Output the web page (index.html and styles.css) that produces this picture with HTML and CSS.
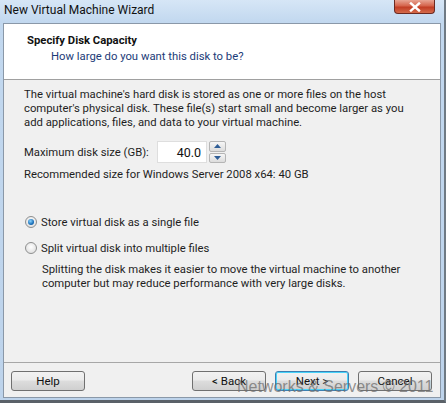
FILE: index.html
```html
<!DOCTYPE html>
<html>
<head>
<meta charset="utf-8">
<link rel="stylesheet" href="styles.css">
</head>
<body>
<div class="window">
  <div class="titlebar">
    <span class="title">New Virtual Machine Wizard</span>
    <div class="close"><svg width="14" height="10" viewBox="0 0 14 10"><path d="M3 1.5 L11 8.5 M11 1.5 L3 8.5" stroke="#ffffff" stroke-width="2.4" stroke-linecap="square"/></svg></div>
  </div>
  <div class="client">
    <div class="header">
      <div class="h-title">Specify Disk Capacity</div>
      <div class="h-sub">How large do you want this disk to be?</div>
    </div>
    <div class="body">
      <p class="para">The virtual machine's hard disk is stored as one or more files on the host computer's physical disk. These file(s) start small and become larger as you add applications, files, and data to your virtual machine.</p>
      <div class="size-row">
        <span class="label">Maximum disk size (GB):</span>
        <div class="spin">
          <div class="spin-input">40.0</div>
          <div class="spin-btns">
            <div class="spin-btn"><svg width="7" height="4" viewBox="0 0 7 4"><path d="M0 4 L3.5 0 L7 4Z" fill="#2f5d96"/></svg></div>
            <div class="spin-btn"><svg width="7" height="4" viewBox="0 0 7 4"><path d="M0 0 L3.5 4 L7 0Z" fill="#2f5d96"/></svg></div>
          </div>
        </div>
      </div>
      <div class="rec">Recommended size for Windows Server 2008 x64: 40 GB</div>
      <div class="radios">
        <div class="radio-row"><span class="radio checked"></span><span>Store virtual disk as a single file</span></div>
        <div class="radio-row"><span class="radio"></span><span>Split virtual disk into multiple files</span></div>
        <p class="desc">Splitting the disk makes it easier to move the virtual machine to another computer but may reduce performance with very large disks.</p>
      </div>
    </div>
    <div class="footer">
      <button class="btn help">Help</button>
      <div class="spacer"></div>
      <button class="btn">&lt; Back</button>
      <button class="btn default">Next &gt;</button>
      <button class="btn">Cancel</button>
    </div>
  </div>
  <div class="watermark">Networks &amp; Servers © 2011</div>
</div>
</body>
</html>
```
FILE: styles.css
```css
html, body {
  margin: 0;
  padding: 0;
  background: #ffffff;
  width: 448px;
  height: 406px;
  overflow: hidden;
}
body {
  font-family: Roboto, "Noto Sans", sans-serif;
  font-size: 11.3px;
  color: #1e1e1e;
}
.window {
  position: relative;
  width: 446px;
  height: 403px;
  background: linear-gradient(to bottom, #d6e6f6 0, #c2d8ef 22px, #bdd3eb 100%);
  border-right: 2px solid #6f7a84;
  border-bottom: 3px solid #5a6168;
  box-sizing: border-box;
  display: flex;
  flex-direction: column;
  padding: 0 3px 2px 3px;
}
.titlebar {
  height: 23px;
  display: flex;
  align-items: flex-start;
  position: relative;
}
.title {
  font-size: 12px;
  color: #111;
  margin: 3px 0 0 1px;
}
.close {
  position: absolute;
  left: 391px;
  top: 0;
  width: 41px;
  height: 14px;
  border: 1px solid #6b2a22;
  border-top: none;
  border-radius: 0 0 4px 4px;
  background: linear-gradient(to bottom, #e8a493 0, #d5644c 45%, #c23d25 55%, #d46b4b 100%);
  display: flex;
  align-items: center;
  justify-content: center;
  box-sizing: border-box;
}
.client {
  flex: 1;
  display: flex;
  flex-direction: column;
  border: 1px solid #8a98a8;
  background: #f0f0f0;
}
.header {
  height: 56px;
  background: #ffffff;
  border-bottom: 1px solid #a0a0a0;
  box-sizing: border-box;
  padding: 9px 0 0 23px;
}
.h-title {
  font-weight: bold;
  color: #111;
  line-height: 15px;
}
.h-sub {
  margin: 1px 0 0 24px;
  color: #1b3b78;
  line-height: 15px;
}
.body {
  flex: 1;
  padding: 8px 20px 0 20px;
}
.para {
  margin: 0;
  line-height: 14px;
}
.size-row {
  display: flex;
  align-items: center;
  margin-top: 11px;
}
.label {
  width: 133px;
}
.spin {
  display: flex;
  align-items: stretch;
  height: 22px;
}
.spin-input {
  width: 50px;
  background: #ffffff;
  border: 1px solid #dedede;
  box-sizing: border-box;
  text-align: right;
  padding: 3px 5px 0 0;
  font-size: 12.5px;
  color: #111;
}
.spin-btns {
  margin-left: 2px;
  width: 17px;
  display: flex;
  flex-direction: column;
  gap: 1px;
}
.spin-btn {
  flex: 1;
  border: 1px solid #b5b5b5;
  border-radius: 2px;
  background: linear-gradient(to bottom, #f6f6f6, #dcdcdc);
  display: flex;
  align-items: center;
  justify-content: center;
}
.rec {
  margin-top: 5px;
  line-height: 14px;
}
.radios {
  margin-top: 33px;
  padding-left: 1px;
}
.radio-row {
  display: flex;
  align-items: center;
  height: 14px;
  margin-bottom: 12px;
}
.radio {
  width: 12px;
  height: 12px;
  border-radius: 50%;
  border: 1px solid #8e8f8f;
  background: radial-gradient(circle at 50% 40%, #ffffff 0, #e3e3e3 70%);
  margin-right: 4px;
  box-sizing: border-box;
  position: relative;
}
.radio.checked::after {
  content: "";
  position: absolute;
  left: 2px;
  top: 2px;
  width: 6px;
  height: 6px;
  border-radius: 50%;
  background: radial-gradient(circle at 40% 35%, #8ad4ff 0, #1a6fb8 60%, #0d4f94 100%);
}
.desc {
  margin: -4px 0 0 17px;
  line-height: 14px;
}
.footer {
  height: 35px;
  border-top: 1px solid #a7a7a7;
  display: flex;
  align-items: flex-start;
  padding: 8px 8px 0 7px;
  gap: 9px;
  box-sizing: border-box;
}
.spacer {
  flex: 1;
}
.btn {
  width: 74px;
  height: 20px;
  border: 1px solid #707070;
  border-radius: 3px;
  background: linear-gradient(to bottom, #f2f2f2 0, #ebebeb 45%, #dddddd 50%, #cfcfcf 100%);
  font-family: Roboto, "Noto Sans", sans-serif;
  font-size: 11.5px;
  color: #111;
  padding: 0;
  line-height: 17px;
}
.btn.default {
  border-color: #3c7fb1;
  box-shadow: inset 0 0 0 1px #48d3fa;
}
.watermark {
  position: absolute;
  left: 237px;
  top: 378px;
  font-family: "Liberation Sans", Arial, sans-serif;
  font-size: 16px;
  color: rgba(110, 110, 110, 0.75);
  white-space: nowrap;
}
```
